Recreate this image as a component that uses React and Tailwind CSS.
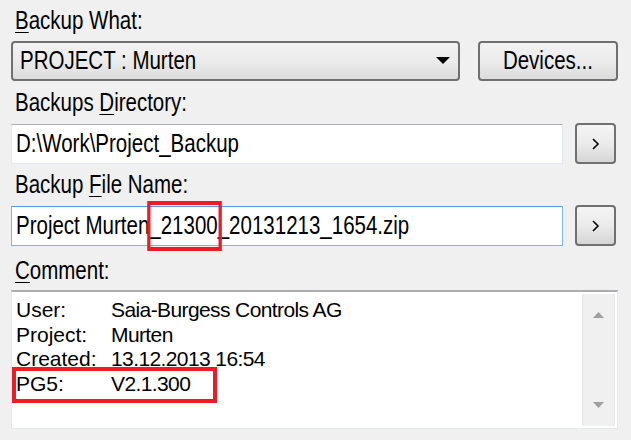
import React from "react";

const font = { fontFamily: '"Liberation Sans", Arial, sans-serif' };

// narrow, tall text like the old MS Sans Serif dialog font
function T({ children, center }) {
  return (
    <span className={"inline-block whitespace-nowrap scale-x-[0.82] " + (center ? "origin-center" : "origin-left")}>
      {children}
    </span>
  );
}

function U({ children }) {
  return <span className="underline underline-offset-[3px] decoration-1">{children}</span>;
}

function Label({ children }) {
  return (
    <div className="h-[41px] pt-[5px] pl-[4px] text-[25px] leading-[30px] text-black">
      <T>{children}</T>
    </div>
  );
}

function ArrowButton() {
  return (
    <button className="w-[41px] h-[41px] rounded-[4px] border-2 border-[#707070] bg-gradient-to-b from-[#f4f4f4] via-[#ebebeb] to-[#d6d6d6] flex items-center justify-center">
      <svg width="10" height="14" viewBox="0 0 10 14">
        <path d="M2 2 L7 7 L2 12" fill="none" stroke="#000" strokeWidth="1.6" />
      </svg>
    </button>
  );
}

function Field({ children, focused }) {
  return (
    <div
      className={
        "flex-1 h-[40px] bg-white border flex items-center pl-[4px] text-[25px] text-black " +
        (focused ? "border-[#7eb4ea] border-t-[#569de5]" : "border-[#e3e9ef] border-t-[#abadb3]")
      }
    >
      {children}
    </div>
  );
}

export default function App() {
  return (
    <div className="w-[631px] h-[440px] bg-[#f0f0f0] pl-[11px] pr-[13px] overflow-hidden text-black" style={font}>
      <Label>
        <U>B</U>ackup What:
      </Label>

      <div className="flex gap-[18px] h-[41px]">
        <div className="w-[449px] h-[40px] rounded-[4px] border-2 border-[#707070] bg-gradient-to-b from-[#f2f2f2] via-[#ebebeb] to-[#dcdcdc] flex items-center justify-between pl-[7px] pr-[8px] text-[25px]">
          <T>PROJECT : Murten</T>
          <svg width="14" height="8" viewBox="0 0 14 8">
            <path d="M0 0 H14 L7 7 Z" fill="#000" />
          </svg>
        </div>
        <button className="w-[140px] h-[40px] rounded-[4px] border-2 border-[#707070] bg-gradient-to-b from-[#f2f2f2] via-[#ebebeb] to-[#dcdcdc] text-[25px] flex items-center justify-center">
          <T center>Devices...</T>
        </button>
      </div>

      <Label>
        Backups <U>D</U>irectory:
      </Label>

      <div className="flex gap-[12px] items-center h-[41px] pr-[2px]">
        <Field>
          <T>D:\Work\Project_Backup</T>
        </Field>
        <ArrowButton />
      </div>

      <Label>
        Backup <U>F</U>ile Name:
      </Label>

      <div className="flex gap-[12px] items-center h-[41px] pr-[2px]">
        <Field focused>
          <T>
            Project Murten
            <span className="relative">
              _21300
              <span className="absolute left-[-3px] right-[-5px] top-[-10px] bottom-[-12px] border-[4px] border-[#ed1c24]" />
            </span>
            _20131213_1654.zip
          </T>
        </Field>
        <ArrowButton />
      </div>

      <div className="h-[44px] pt-[9px] pl-[4px] text-[25px] leading-[30px]">
        <T>
          <U>C</U>omment:
        </T>
      </div>

      <div className="relative h-[139px] bg-white border border-[#e3e9ef] border-t-2 border-t-[#abadb3] flex">
        <div className="flex-1 pl-[4px] pt-[6px] text-[21px] leading-[24.7px]">
          {[
            ["User:", "Saia-Burgess Controls AG"],
            ["Project:", "Murten"],
            ["Created:", "13.12.2013 16:54"],
            ["PG5:", "V2.1.300"],
          ].map(([k, v]) => (
            <div key={k} className="flex h-[24.7px] items-end">
              <span className="w-[95px] whitespace-nowrap">{k}</span>
              <span className="whitespace-nowrap tracking-[-0.6px]">{v}</span>
            </div>
          ))}
        </div>
        <div className="w-[33px] my-[2px] mr-[2px] bg-[#f0f0f0] border-x border-[#e6e6e6] flex flex-col items-center justify-between py-[18px]">
          <svg width="11" height="6" viewBox="0 0 11 6">
            <path d="M0 6 L5.5 0 L11 6 Z" fill="#a0a0a0" />
          </svg>
          <svg width="11" height="6" viewBox="0 0 11 6">
            <path d="M0 0 L11 0 L5.5 6 Z" fill="#a0a0a0" />
          </svg>
        </div>
        <div className="absolute left-0 top-[75px] w-[205px] h-[36px] border-[4px] border-[#ed1c24]" />
      </div>
    </div>
  );
}
